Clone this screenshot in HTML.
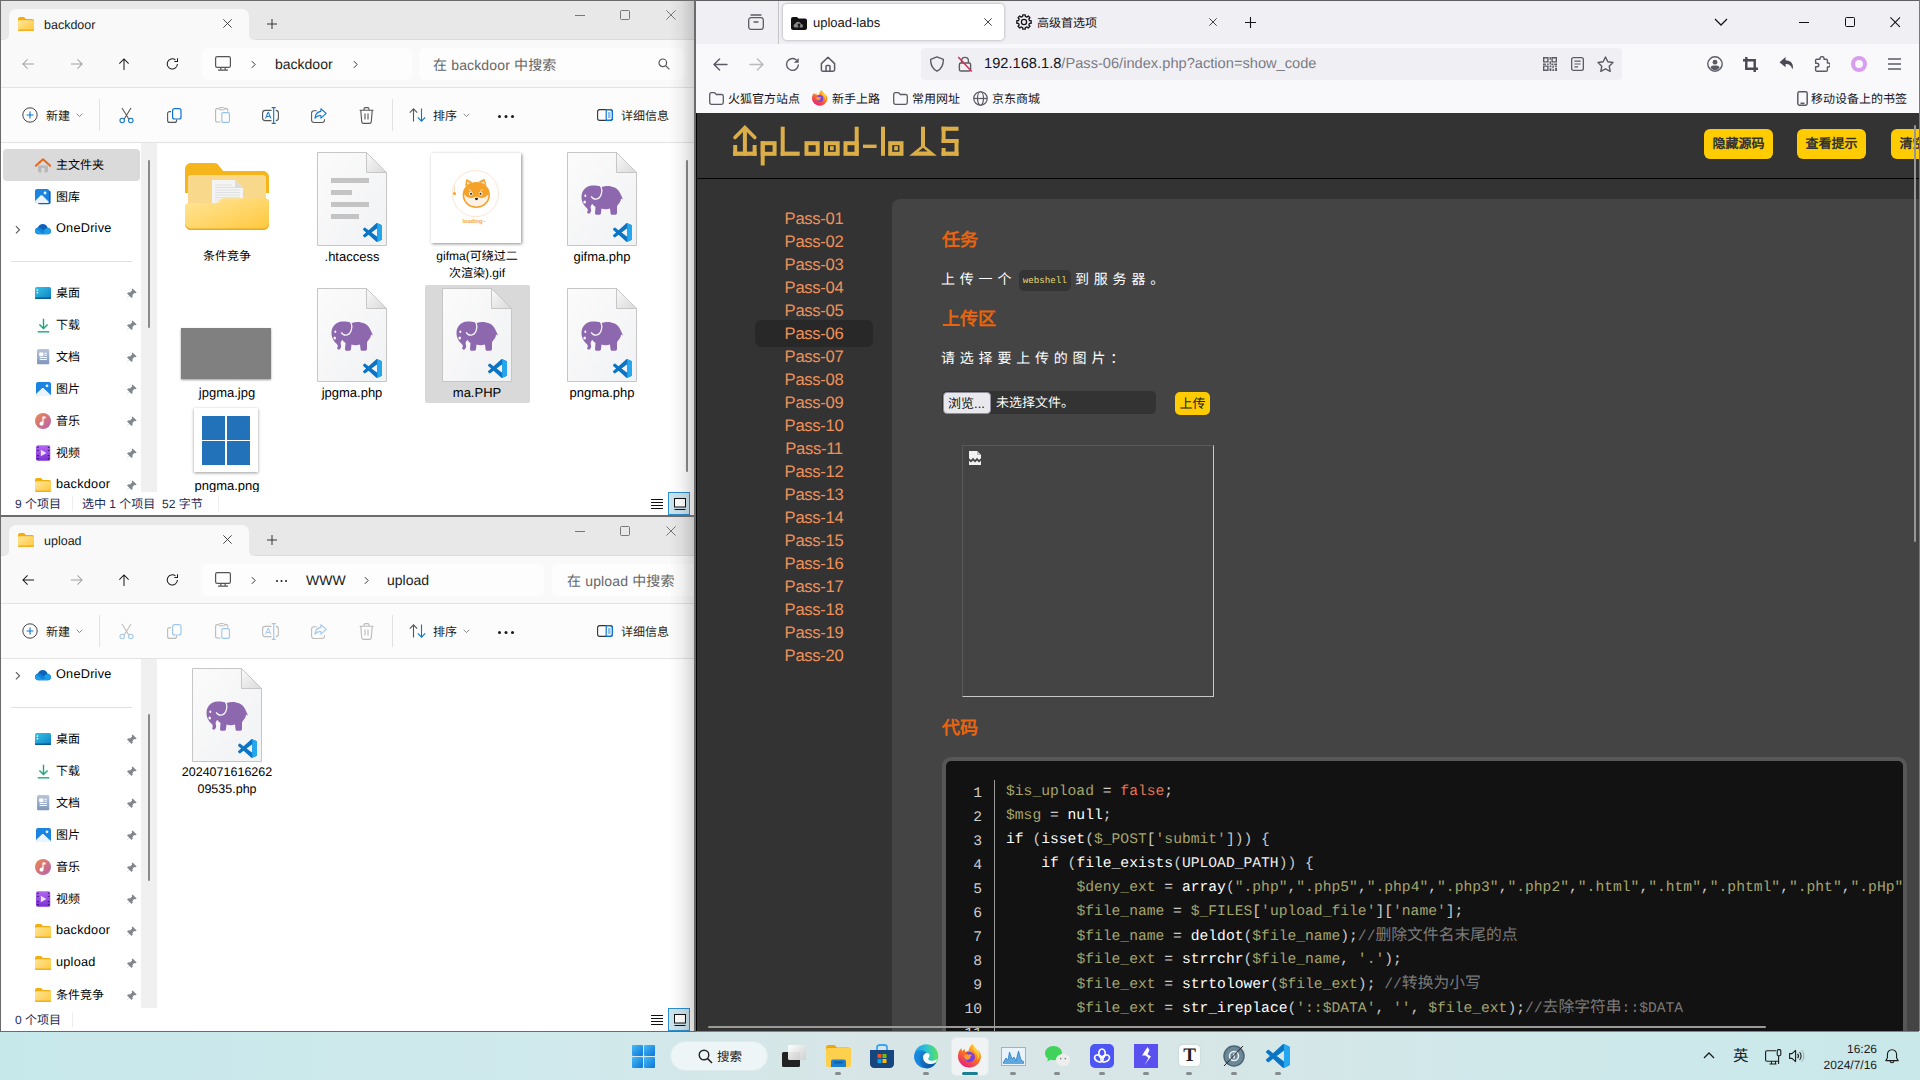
<!DOCTYPE html>
<html lang="zh-CN"><head><meta charset="utf-8"><title>screenshot</title>
<style>
*{box-sizing:border-box;margin:0;padding:0}
html,body{width:1920px;height:1080px;overflow:hidden}
body{position:relative;text-rendering:geometricPrecision;background:#cfe7ea;font-family:"Liberation Sans",sans-serif;font-size:12px;color:#1b1b1b}
.abs{position:absolute}
svg{position:absolute;overflow:visible}
.t{position:absolute;white-space:nowrap;line-height:1}
/* explorer */
.ex{position:absolute;left:0;width:696px;height:517px;background:#6b6b6b;overflow:hidden}
.ex .in{position:absolute;left:1px;top:1px;width:693px;height:514px;background:#fff;overflow:hidden}
.ex .tb{position:absolute;left:0;top:0;width:693px;height:39px;background:#e8e8e8}
.ex .tab{position:absolute;left:8px;top:8px;width:240px;height:31px;background:#f9f9f9;border-radius:7px 7px 0 0}
.ex .tabl,.ex .tabr{position:absolute;top:34px;width:6px;height:5px;background:#f9f9f9}
.ex .tabl i,.ex .tabr i{position:absolute;left:0;top:0;width:6px;height:5px;background:#e8e8e8;display:block}
.ex .tabl{left:2px}.ex .tabl i{border-radius:0 0 5px 0}
.ex .tabr{left:248px}.ex .tabr i{border-radius:0 0 0 5px}
.ex .nav{position:absolute;left:0;top:39px;width:693px;height:48px;background:#f9f9f9;border-bottom:1px solid #e3e3e3}
.ex .box{position:absolute;top:8px;height:32px;background:#fdfdfd;border-radius:5px}
.ex .tools{position:absolute;left:0;top:87px;width:693px;height:55px;background:#fcfcfc;border-bottom:1px solid #e3e3e3}
.ex .sep{position:absolute;width:1px;background:#e2e2e2}
.ex .side{position:absolute;left:0;top:142px;width:140px;height:349px;background:#fff;overflow:hidden}
.ex .split{position:absolute;left:140px;top:142px;width:16px;height:349px;background:#f0f0f0}
.ex .main{position:absolute;left:156px;top:142px;width:537px;height:349px;background:#fff;overflow:hidden}
.ex .status{position:absolute;left:0;top:491px;width:693px;height:23px;background:#fff}
.ex .shade{position:absolute;left:668px;top:0;width:26px;height:516px;background:linear-gradient(90deg,rgba(0,0,0,0),rgba(0,0,0,.05) 50%,rgba(0,0,0,.17))}
.srow{position:absolute;left:0;width:140px;height:32px}
.srow .t{color:#000;left:55px;top:9.7px;font-size:12px}
.srow .t.en{font-size:12.7px;top:9px;letter-spacing:.25px}
.lab{position:absolute;color:#000;text-align:center;font-size:12px;line-height:17px;width:110px;white-space:nowrap}
.lab.en{font-size:13px}
.lab.num{font-size:12.5px}
/* firefox */
#ff{position:absolute;left:696px;top:0;width:1224px;height:1032px;background:#f9f9fb;overflow:hidden}
#page{position:absolute;left:0;top:113px;width:1223px;height:919px;background:#333;overflow:hidden}
.pass{position:absolute;left:59px;width:118px;text-align:center;font-size:16.6px;letter-spacing:-.3px;color:#f0915a;line-height:23px}
.h3{position:absolute;left:246px;font-size:18px;font-weight:bold;color:#e8640f;line-height:1;white-space:nowrap}
.p{position:absolute;left:245px;font-size:14px;color:#fff;letter-spacing:4.8px;line-height:1;white-space:nowrap}
.btn{position:absolute;background:#fecc00;border-radius:6px;color:#333;font-weight:bold;font-size:13px;text-align:center;white-space:nowrap}
.cl{position:absolute;left:0;white-space:pre;font-family:"Liberation Mono",monospace;font-size:14.67px;line-height:24px;height:24px;color:#ccc}
.ln{position:absolute;width:40px;text-align:right;font-family:"Liberation Mono",monospace;font-size:14.67px;line-height:24px;color:#ccc}
.v{color:#a5a56f}.k{color:#fff;font-weight:bold}.f{color:#fff}.c{color:#7a7a7a}.b{color:#e8734f}.z{font-size:15.8px}.s{color:#a5a56f}
/* taskbar */
#task{position:absolute;left:0;top:1032px;width:1920px;height:48px;background:linear-gradient(90deg,#c7e8eb 0%,#cfe9ec 28%,#d8e5e6 46%,#d7e6e7 62%,#cfe8ea 80%,#c9e8ea 100%)}
</style></head>
<body>

<svg width="0" height="0" style="position:absolute">
<defs>
<linearGradient id="gfold" x1="0" y1="0" x2="1" y2="1"><stop offset="0" stop-color="#ffe59a"/><stop offset="1" stop-color="#ffc83c"/></linearGradient>
<linearGradient id="gpage" x1="0" y1="0" x2="1" y2="1"><stop offset="0" stop-color="#fbfbfb"/><stop offset="1" stop-color="#f1f2f4"/></linearGradient>
<linearGradient id="gcorner" x1="0" y1="0" x2="1" y2="1"><stop offset="0" stop-color="#fafafa"/><stop offset="1" stop-color="#d9d9d9"/></linearGradient>
<linearGradient id="gwin" x1="0" y1="0" x2="1" y2="1"><stop offset="0" stop-color="#4cc2ff"/><stop offset="1" stop-color="#0a6fd6"/></linearGradient>
<linearGradient id="gmusic" x1="0" y1="0" x2="1" y2="1"><stop offset="0" stop-color="#f08a4b"/><stop offset="1" stop-color="#b45fb0"/></linearGradient>
<linearGradient id="gvid" x1="0" y1="0" x2="0" y2="1"><stop offset="0" stop-color="#b06af0"/><stop offset="1" stop-color="#7d2fd6"/></linearGradient>
<linearGradient id="gdesk" x1="0" y1="0" x2="1" y2="1"><stop offset="0" stop-color="#35c5ea"/><stop offset="1" stop-color="#0f7fc0"/></linearGradient>
<linearGradient id="gdoc" x1="0" y1="0" x2="0" y2="1"><stop offset="0" stop-color="#b8c6dc"/><stop offset="1" stop-color="#7e95b9"/></linearGradient>
<linearGradient id="gfx" x1="0.8" y1="0" x2="0.2" y2="1"><stop offset="0" stop-color="#ffd43a"/><stop offset=".45" stop-color="#ff7a1a"/><stop offset="1" stop-color="#e31587"/></linearGradient>
<linearGradient id="gedge" x1="0" y1="0" x2="1" y2="1"><stop offset="0" stop-color="#1b84d6"/><stop offset=".6" stop-color="#1c9fc5"/><stop offset="1" stop-color="#5edb6a"/></linearGradient>

<symbol id="s-folder" viewBox="0 0 16 14"><path d="M0 2.2C0 1 .8 0 2 0h4l2 2h6.2c1 0 1.8.8 1.8 1.8V5H0z" fill="#f2ae0c"/><rect x="0" y="3.2" width="16" height="10.8" rx="1.4" fill="url(#gfold)"/><rect x="0" y="12.6" width="16" height="1.4" rx=".7" fill="#f0b020"/></symbol>

<symbol id="s-back" viewBox="0 0 14 12"><path d="M13 6H1.2M6 1 1 6l5 5" fill="none" stroke="currentColor" stroke-width="1.1"/></symbol>
<symbol id="s-fwd" viewBox="0 0 14 12"><path d="M1 6h11.8M8 1l5 5-5 5" fill="none" stroke="currentColor" stroke-width="1.1"/></symbol>
<symbol id="s-up" viewBox="0 0 12 14"><path d="M6 13V1.2M1 6l5-5 5 5" fill="none" stroke="currentColor" stroke-width="1.1"/></symbol>
<symbol id="s-ref" viewBox="0 0 14 14"><path d="M12.3 7A5.5 5.5 0 1 1 10.2 2.6M12.4.8v3.4H9" fill="none" stroke="currentColor" stroke-width="1.1"/></symbol>
<symbol id="s-pc" viewBox="0 0 16 15"><rect x=".6" y=".6" width="14.8" height="10.8" rx="1.6" fill="none" stroke="#555" stroke-width="1.2"/><path d="M3 14.2h10M5.8 11.5v2.7M10.2 11.5v2.7" stroke="#555" stroke-width="1.2" fill="none"/></symbol>
<symbol id="s-chev" viewBox="0 0 6 10"><path d="M1 1l4 4-4 4" fill="none" stroke="currentColor" stroke-width="1.2"/></symbol>
<symbol id="s-chevd" viewBox="0 0 8 5"><path d="M.8.8 4 4 7.2.8" fill="none" stroke="#777" stroke-width="1"/></symbol>
<symbol id="s-search" viewBox="0 0 12 12"><circle cx="4.8" cy="4.8" r="3.8" fill="none" stroke="#555" stroke-width="1.2"/><path d="M7.6 7.6 11.4 11.4" stroke="#555" stroke-width="1.2"/></symbol>
<symbol id="s-new" viewBox="0 0 16 16"><circle cx="8" cy="8" r="7.2" fill="none" stroke="#444" stroke-width="1"/><path d="M8 4.6v6.8M4.6 8h6.8" stroke="#0a74d4" stroke-width="1.1"/></symbol>
<symbol id="s-cut" viewBox="0 0 16 17"><path d="M3.2 0.6 10.6 12.6M12.8 0.6 5.4 12.6" stroke="#555" stroke-width="1.1" fill="none"/><circle cx="3.4" cy="13.8" r="2.4" fill="none" stroke="#0a74d4" stroke-width="1.1"/><circle cx="12.6" cy="13.8" r="2.4" fill="none" stroke="#0a74d4" stroke-width="1.1"/></symbol>
<symbol id="s-copy" viewBox="0 0 15 15"><path d="M4 3.6H2.6C1.6 3.6 .6 4.4 .6 5.6V12.4c0 1.1.9 2 2 2h5c1.1 0 2-.9 2-2V11.6" fill="none" stroke="#555" stroke-width="1.1"/><rect x="5.6" y=".6" width="8.4" height="10.4" rx="2" fill="none" stroke="#0a74d4" stroke-width="1.2"/></symbol>
<symbol id="s-paste" viewBox="0 0 15 16"><path d="M5.5 15H2.2C1.3 15 .6 14.3 .6 13.4V3.2C.6 2.3 1.3 1.6 2.2 1.6H3.6M9.8 1.6H11.2C12.1 1.6 12.8 2.3 12.8 3.2V4.6" fill="none" stroke="#555" stroke-width="1.1"/><rect x="3.8" y=".6" width="5.8" height="2.2" rx="1" fill="none" stroke="#555" stroke-width="1"/><rect x="6.8" y="5.6" width="7.6" height="9.8" rx="1.2" fill="none" stroke="#0a74d4" stroke-width="1.1"/></symbol>
<symbol id="s-ren" viewBox="0 0 17 17"><path d="M9.5 3.4H3.2C1.8 3.4 .6 4.6 .6 6V11c0 1.4 1.2 2.6 2.6 2.6h6.3M13.8 3.4c1.4 0 2.6 1.2 2.6 2.6V11c0 1.4-1.2 2.6-2.6 2.6" fill="none" stroke="#555" stroke-width="1.1"/><path d="M11.7 .6V16.4M9.7 .6h4M9.7 16.4h4" stroke="#0a74d4" stroke-width="1.1" fill="none"/><path d="M3.6 11.4 6 5.2h.4L8.8 11.4M4.5 9.4h3.4" stroke="#0a74d4" stroke-width="1" fill="none"/></symbol>
<symbol id="s-share" viewBox="0 0 17 16"><path d="M6 3H3.2C1.8 3 .6 4.2 .6 5.6V12.8c0 1.4 1.2 2.6 2.6 2.6h8.6c1.4 0 2.6-1.2 2.6-2.6V12" fill="none" stroke="#555" stroke-width="1.1"/><path d="M10.5 .8 16.2 5.8 10.5 10.8V8C7.6 7.8 5.6 8.8 4.2 11c.2-4 2.4-6.8 6.3-7.4z" fill="none" stroke="#0a74d4" stroke-width="1.1" stroke-linejoin="round"/></symbol>
<symbol id="s-del" viewBox="0 0 15 17"><path d="M.6 3.2h13.8M5 3V2C5 1.2 5.6 .6 6.4 .6h2.2C9.4 .6 10 1.2 10 2v1M1.8 3.4l.9 11.2c.1 1 .9 1.8 1.9 1.8h5.8c1 0 1.8-.8 1.9-1.8l.9-11.2M6 6.6v6M9 6.6v6" fill="none" stroke="#555" stroke-width="1.1"/></symbol>
<symbol id="s-sort" viewBox="0 0 18 14"><path d="M4.5 13.4V1M.8 4.6 4.5 .9l3.7 3.7" fill="none" stroke="#555" stroke-width="1.1"/><path d="M12.5 .6V13M8.8 9.4l3.7 3.7 3.7-3.7" fill="none" stroke="#0a74d4" stroke-width="1.1"/></symbol>
<symbol id="s-det" viewBox="0 0 16 12"><rect x=".6" y=".6" width="14.8" height="10.8" rx="2.2" fill="none" stroke="#333" stroke-width="1.1"/><path d="M9.2 .6H13.2c1.2 0 2.2 1 2.2 2.2V9.2c0 1.2-1 2.2-2.2 2.2H9.2z" fill="none" stroke="#0a74d4" stroke-width="1.2"/><path d="M11 4h2.6M11 6h2.6M11 8h2.6" stroke="#0a74d4" stroke-width=".9"/></symbol>
<symbol id="s-pin" viewBox="0 0 11 11"><path d="M6.6 .4 10.6 4.4 9.6 5.2 8.4 4.9 6.6 6.7 6.5 9 5.5 10 3.3 7.7.5 10.5.4 10.4 3.2 7.6 1 5.4 2 4.4 4.3 4.3 6.1 2.5 5.8 1.3z" fill="#7f868c"/></symbol>
<symbol id="s-min" viewBox="0 0 10 1"><path d="M0 .5h10" stroke="currentColor" stroke-width="1"/></symbol>
<symbol id="s-max" viewBox="0 0 10 10"><rect x=".5" y=".5" width="9" height="9" rx="1" fill="none" stroke="currentColor" stroke-width="1"/></symbol>
<symbol id="s-x" viewBox="0 0 10 10"><path d="M.4.4 9.6 9.6M9.6.4.4 9.6" stroke="currentColor" stroke-width="1" fill="none"/></symbol>
<symbol id="s-plus" viewBox="0 0 10 10"><path d="M5 0v10M0 5h10" stroke="currentColor" stroke-width="1" fill="none"/></symbol>

<symbol id="s-home" viewBox="0 0 16 15"><path d="M3 7.6V13c0 .8.6 1.4 1.4 1.4H6.5V10h3v4.4h2.1c.8 0 1.4-.6 1.4-1.4V7.6z" fill="#b9b9b9"/><path d="M.8 7.8 8 1.2l7.2 6.6" fill="none" stroke="#e8671c" stroke-width="1.9" stroke-linecap="round" stroke-linejoin="round"/></symbol>
<symbol id="s-gal" viewBox="0 0 16 16"><rect x="2.6" y="1.6" width="13" height="13.6" rx="2" fill="#0f5fb4"/><rect x="0" y="0" width="14" height="14" rx="2" fill="#1a84e0"/><path d="M0 12 5.5 6.6c.6-.6 1.4-.6 2 0L14 13c-.3.6-1 1-1.7 1H2c-1.1 0-2-.9-2-2z" fill="#eaf4ff"/><circle cx="10" cy="4" r="1.4" fill="#eaf4ff"/></symbol>
<symbol id="s-cloud" viewBox="0 0 17 11"><path d="M4.2 11C1.9 11 0 9.4 0 7.3 0 5.5 1.3 4 3.1 3.6 3.9 1.5 5.9 0 8.2 0c2.5 0 4.6 1.6 5.2 3.9C15.4 4.1 17 5.6 17 7.5 17 9.5 15.3 11 13.2 11z" fill="#0f62b8"/><path d="M4.2 11C1.9 11 0 9.4 0 7.3 0 6.3.4 5.4 1.1 4.7L8.5 7.2 12.5 4.3c.3-.2.6-.3.9-.4C15.4 4.1 17 5.6 17 7.5 17 9.5 15.3 11 13.2 11z" fill="#1f9ee8"/><path d="M1.1 4.7C1.7 4.1 2.4 3.8 3.1 3.6 4.2 3.4 5.3 3.7 6.2 4.4L11 8.2 8 10.2z" fill="#1482da"/></symbol>
<symbol id="s-desk" viewBox="0 0 16 12"><rect width="16" height="12" rx="1.6" fill="url(#gdesk)"/><rect x="1.6" y="2.4" width="1.6" height="1.4" fill="#e8f8ff"/><rect x="1.6" y="5" width="1.6" height="1.4" fill="#e8f8ff"/><path d="M0 10.4h16V11c0 .6-.4 1-1 1H1c-.6 0-1-.4-1-1z" fill="#0a5a90"/></symbol>
<symbol id="s-dl" viewBox="0 0 14 16"><path d="M7 .6V11M2.6 6.8 7 11.2l4.4-4.4" fill="none" stroke="#18a878" stroke-width="1.5"/><path d="M.8 14.8h12.4" stroke="#18a878" stroke-width="1.5"/></symbol>
<symbol id="s-doc" viewBox="0 0 13 16"><rect width="13" height="16" rx="1.6" fill="url(#gdoc)"/><path d="M2.8 4h3.4v3H2.8zM7.6 4.4h2.8M7.6 6.4h2.8M2.8 8.8h7.6M2.8 10.8h7.6" stroke="#fff" stroke-width="1" fill="#fff"/></symbol>
<symbol id="s-pic" viewBox="0 0 15 14"><rect width="15" height="14" rx="2" fill="#1a84e0"/><path d="M0 12 5.8 6.4c.6-.6 1.5-.6 2.1 0L15 13.2c-.3.5-.9.8-1.5.8h-12C.7 14 0 13.3 0 12.5z" fill="#eaf4ff"/><circle cx="11" cy="3.8" r="1.4" fill="#eaf4ff"/></symbol>
<symbol id="s-mus" viewBox="0 0 16 16"><circle cx="8" cy="8" r="8" fill="url(#gmusic)"/><path d="M7.4 3.6h3.2v1.8H8.6v5.2a2 2 0 1 1-1.2-1.8z" fill="#fff"/></symbol>
<symbol id="s-vid" viewBox="0 0 15 16"><rect width="15" height="16" rx="1.8" fill="url(#gvid)"/><path d="M5 4.6v6.8l5.8-3.4z" fill="#f0e0ff"/><path d="M1.2 2.2h1.6M1.2 5.2h1.6M1.2 10.8h1.6M1.2 13.8h1.6M12.2 2.2h1.6M12.2 5.2h1.6M12.2 10.8h1.6M12.2 13.8h1.6" stroke="#3d1478" stroke-width="1.3"/></symbol>

<symbol id="s-page" viewBox="0 0 70 94"><path d="M.5.5H49.5L69.5 20.5V93.5H.5z" fill="url(#gpage)" stroke="#c6c6c6" stroke-width="1"/><path d="M49.5.5V20.5H69.5z" fill="url(#gcorner)" stroke="#c6c6c6" stroke-width="1" stroke-linejoin="round"/></symbol>
<symbol id="s-ele" viewBox="0 0 42 30"><path d="M21 2C26 0 36 1 39 8 40 10 41 12 42 14.5L40 13.5C40 17 37 19 36 21.5L36 28Q36 29.7 34.5 29.7L30.5 29.7Q29.5 29.7 29.5 28L29 23.5C26 24.5 23 24.5 20.5 23.5L20 28Q20 29.7 18.5 29.7L15 29.7Q14 29.7 14 28L14.5 22C13 21 12 20 11.5 19 10 20 9.3 21.5 9.8 23.5 10.5 25.5 10.5 27 8 29L5.8 27.2C7 26.2 7.2 25 6.2 23.5 4 21 1 19 .5 13 0 5 6 0 12 .5 16 .5 19 1 21 2z" fill="#8e68ae"/><path d="M10.2 11.4C12.5 15.5 18 15 20 10 21.5 6 20.5 2.5 19.3 .7" fill="none" stroke="#f7f7f9" stroke-width="1.3"/><ellipse cx="4.3" cy="10.8" rx="1" ry="1.2" fill="#f7f7f9"/><ellipse cx="3.7" cy="17" rx="1.3" ry="1.5" fill="#f7f7f9"/></symbol>
<symbol id="s-vsc" viewBox="0 0 100 100"><path d="M96.46 10.8 75.86.880C73.47-.270 70.62.210 68.75 2.09L29.31 38.04 12.13 25.01C10.53 23.79 8.3 23.89 6.81 25.24L1.3 30.26C-.520 31.91-.520 34.77 1.3 36.43L16.19 50 1.3 63.58C-.520 65.23-.520 68.09 1.3 69.75L6.81 74.76C8.3 76.12 10.53 76.21 12.13 75L29.31 61.96 68.75 97.91C70.62 99.79 73.47 100.27 75.86 99.12L96.46 89.21C98.63 88.17 100 85.98 100 83.58V16.42C100 14.02 98.62 11.83 96.46 10.79ZM75.01 72.7 45.07 50 75.01 27.3Z" fill="#0b74c4"/><path d="M96.46 10.8 75.86.880C74.2.1 72.3.1 70.7.8 72.6 1.6 75.01 3.5 75.01 7V93c0 3.5-2.4 5.4-4.3 6.2 1.6.7 3.5.7 5.15-.080L96.46 89.21C98.63 88.17 100 85.98 100 83.58V16.42C100 14.02 98.62 11.83 96.46 10.79Z" fill="#25a7f0"/></symbol>
<symbol id="s-bigfolder" viewBox="0 0 84 67"><path d="M0 6C0 2.7 2.7 0 6 0H29c2 0 3.6.8 4.8 2.4L38 8H78c3.3 0 6 2.7 6 6V30H0z" fill="#f5b51b"/><rect x="3" y="12" width="78" height="40" rx="3" fill="#f8d98c"/><path d="M27 17h23l8 8v20H27z" fill="#f4f4f4"/><path d="M50 17v8h8z" fill="#dcdcdc"/><path d="M30 22h17M30 24.5h25M30 27h25M30 29.5h25M30 32h25M30 34.5h25M30 37h25" stroke="#dadada" stroke-width=".8"/><path d="M0 43.5C0 41.5 1.6 39.9 3.6 39.9H30c1.6 0 3-.6 4-1.7l1.3-1.3c1-1.1 2.4-1.7 4-1.7H80.4c2 0 3.6 1.6 3.6 3.6V61c0 3.3-2.7 6-6 6H6c-3.3 0-6-2.7-6-6z" fill="url(#gfold)"/><path d="M0 61c0 3.3 2.7 6 6 6H78c3.3 0 6-2.7 6-6v-1.5c0 3.3-2.7 6-6 6H6c-3.3 0-6-2.7-6-6z" fill="#eda91a"/></symbol>
</defs>
</svg>


<svg width="0" height="0" style="position:absolute"><defs>
<symbol id="f-back" viewBox="0 0 16 14"><path d="M15 7H1.6M7 1 1 7l6 6" fill="none" stroke="currentColor" stroke-width="1.5" stroke-linecap="round" stroke-linejoin="round"/></symbol>
<symbol id="f-fwd" viewBox="0 0 16 14"><path d="M1 7h13.4M9 1l6 6-6 6" fill="none" stroke="currentColor" stroke-width="1.5" stroke-linecap="round" stroke-linejoin="round"/></symbol>
<symbol id="f-rel" viewBox="0 0 16 16"><path d="M14.2 8.5A6.3 6.3 0 1 1 11.8 3" fill="none" stroke="currentColor" stroke-width="1.5" stroke-linecap="round"/><path d="M14.6 1v5.2H9.4z" fill="currentColor"/></symbol>
<symbol id="f-home" viewBox="0 0 16 16"><path d="M1.4 7.6 8 1.2l6.6 6.4V13.8c0 .8-.6 1.4-1.4 1.4H2.8c-.8 0-1.4-.6-1.4-1.4z" fill="none" stroke="currentColor" stroke-width="1.5" stroke-linejoin="round"/><path d="M6 15V10.6c0-.6.4-1 1-1h2c.6 0 1 .4 1 1V15" fill="none" stroke="currentColor" stroke-width="1.5"/></symbol>
<symbol id="f-shield" viewBox="0 0 16 16"><path d="M8 .9 14.4 3.3c0 5.2-1.6 9.6-6.4 11.9C3.2 12.9 1.6 8.5 1.6 3.3z" fill="none" stroke="currentColor" stroke-width="1.4" stroke-linejoin="round"/></symbol>
<symbol id="f-lock" viewBox="0 0 16 16"><path d="M4.6 7V4.8a3.4 3.4 0 0 1 6.8 0V7" fill="none" stroke="currentColor" stroke-width="1.4"/><rect x="2.4" y="7" width="11.2" height="8" rx="1.6" fill="none" stroke="currentColor" stroke-width="1.4"/><path d="M1.2 1 14.8 15.4" stroke="#e22850" stroke-width="1.4"/></symbol>
<symbol id="f-qr" viewBox="0 0 15 15"><path d="M0 0h6v6H0zM1.5 1.5v3h3v-3zM9 0h6v6H9zM10.5 1.5v3h3v-3zM0 9h6v6H0zM1.5 10.5v3h3v-3zM7 0h1.5v3H7zM7 4.5h1.5V8H7zM0 7h3v1.5H0zM4.5 7H6v1.5H4.5zM9 7h2v1.5H9zM12 7h3v1.5h-3zM7 9h2v2H7zM10 9h1.5v3H10zM12.5 9H15v1.5h-2.5zM7 12h2v3H7zM10 13h2v2h-2zM13 11.5h2V15h-2z" fill="currentColor" fill-rule="evenodd"/></symbol>
<symbol id="f-reader" viewBox="0 0 14 15"><rect x=".7" y=".7" width="12.6" height="13.6" rx="2" fill="none" stroke="currentColor" stroke-width="1.4"/><path d="M3.6 4.4h6.8M3.6 7.5h6.8M3.6 10.6h4" stroke="currentColor" stroke-width="1.3"/></symbol>
<symbol id="f-star" viewBox="0 0 17 16"><path d="M8.5 1 10.8 5.8 16 6.5 12.2 10.2 13.2 15.4 8.5 12.9 3.8 15.4 4.8 10.2 1 6.5 6.2 5.8z" fill="none" stroke="currentColor" stroke-width="1.4" stroke-linejoin="round"/></symbol>
<symbol id="f-acct" viewBox="0 0 16 16"><circle cx="8" cy="8" r="7.2" fill="none" stroke="currentColor" stroke-width="1.4"/><circle cx="8" cy="6.2" r="2.4" fill="currentColor"/><path d="M3.4 11.4C4.4 9.8 6 9.6 8 9.6s3.6.2 4.6 1.8C11.6 13 10 14 8 14s-3.6-1-4.6-2.6z" fill="currentColor"/></symbol>
<symbol id="f-crop" viewBox="0 0 16 16"><path d="M3.5 0v12.5H16M0 3.5h12.5V16" fill="none" stroke="currentColor" stroke-width="2.6"/></symbol>
<symbol id="f-undo" viewBox="0 0 16 15"><path d="M6.5 0 0 5.5 6.5 11V7.5c3.5-.2 6 1.3 7.2 5.5C14.8 13 16 4 6.5 3.5z" fill="currentColor"/></symbol>
<symbol id="f-puz" viewBox="0 0 16 16"><path d="M6 3.2V2.6a2 2 0 0 1 4 0v.6h2.2c.7 0 1.2.5 1.2 1.2V7h.8a2 2 0 0 1 0 4h-.8v3c0 .7-.5 1.2-1.2 1.2H2.8c-.7 0-1.2-.5-1.2-1.2V10.8H3a1.8 1.8 0 0 0 0-3.6H1.6V4.4c0-.7.5-1.2 1.2-1.2z" fill="none" stroke="currentColor" stroke-width="1.4" stroke-linejoin="round"/></symbol>
<symbol id="f-menu" viewBox="0 0 13 12"><path d="M0 1h13M0 6h13M0 11h13" stroke="currentColor" stroke-width="1.4"/></symbol>
<symbol id="f-view" viewBox="0 0 16 16"><path d="M3 1h10" stroke="currentColor" stroke-width="1.3" stroke-linecap="round"/><rect x=".7" y="3.7" width="14.6" height="11.6" rx="2.2" fill="none" stroke="currentColor" stroke-width="1.3"/><path d="M6 8h4" stroke="currentColor" stroke-width="1.3" stroke-linecap="round"/></symbol>
<symbol id="f-gear" viewBox="0 0 16 16"><path d="M6.67 2.46 L6.74 0.81 L9.26 0.81 L9.33 2.46 L10.98 3.14 L12.2 2.03 L13.97 3.8 L12.86 5.02 L13.54 6.67 L15.19 6.74 L15.19 9.26 L13.54 9.33 L12.86 10.98 L13.97 12.2 L12.2 13.97 L10.98 12.86 L9.33 13.54 L9.26 15.19 L6.74 15.19 L6.67 13.54 L5.02 12.86 L3.8 13.97 L2.03 12.2 L3.14 10.98 L2.46 9.33 L0.81 9.26 L0.81 6.74 L2.46 6.67 L3.14 5.02 L2.03 3.8 L3.8 2.03 L5.02 3.14Z" fill="none" stroke="currentColor" stroke-width="1.3" stroke-linejoin="round"/><circle cx="8" cy="8" r="2.6" fill="none" stroke="currentColor" stroke-width="1.3"/></symbol>
<symbol id="f-bfold" viewBox="0 0 15 13"><path d="M.7 2.4C.7 1.5 1.4.7 2.4.7H5c.6 0 1.1.3 1.4.7L7.2 2.5H12.6c.9 0 1.7.8 1.7 1.7V10.6c0 .9-.8 1.7-1.7 1.7H2.4c-.9 0-1.7-.8-1.7-1.7z" fill="none" stroke="#5b5b66" stroke-width="1.3"/></symbol>
<symbol id="f-globe" viewBox="0 0 16 16"><circle cx="8" cy="8" r="7.2" fill="none" stroke="#5b5b66" stroke-width="1.3"/><ellipse cx="8" cy="8" rx="3.2" ry="7.2" fill="none" stroke="#5b5b66" stroke-width="1.3"/><path d="M.8 8h14.4" stroke="#5b5b66" stroke-width="1.3"/></symbol>
<symbol id="f-fx" viewBox="0 0 32 32"><path d="M29.5 11.5c-.6-1.5-1.9-3.1-2.9-3.6.8 1.6 1.3 3.2 1.5 4.4-1.8-4.5-4.9-6.3-7.4-10.3-.1-.2-.3-.4-.4-.6-.1-.1-.1-.3-.2-.4-.1-.3-.2-.5-.2-.8 0 0 0-.1-.1-.1h-.1c-4 2.4-5.4 6.7-5.5 8.9-1.6.1-3.2.7-4.4 1.7-.1-.1-.3-.2-.4-.3-.4-1.3-.4-2.6-.1-3.9-1.6.7-2.9 1.9-3.8 3-.6-.8-.6-3.4-.5-3.9-.2.1-.4.2-.5.3-.6.4-1.1.9-1.6 1.4C2.3 8 1.9 8.7 1.5 9.4c-.7 1.5-1.1 3-1.3 4.7 0 .2-.1.8-.1.9-.1.6-.1 1.1-.1 1.7C0 24.6 6.8 31.5 15.3 31.5c7.6 0 13.8-5.5 15.1-12.7 0-.2.1-.4.1-.6.3-2.3 0-4.7-1-6.7z" fill="url(#gfx)"/><circle cx="15.5" cy="17.2" r="7" fill="#7542e5"/><path d="M8.5 14.2c1.8-1.5 4.2-1.3 5.6.2 1.3-.7 3.3-.7 4.6.1-1.2.6-2 1.5-2 2.9 0 2-2 3.6-4.2 3.6-3 0-5-3-4-6.8z" fill="#ff9a2a"/><path d="M20.7 2c2.5 4 5.6 5.8 7.4 10.3.9 4-0.5 7-2.6 9 1-3.5.5-6.5-1.5-9-1.5-2-3.2-3.5-3.8-6-.3-1.4-.1-2.9.5-4.3z" fill="#ffd43a" opacity=".85"/></symbol>
<symbol id="f-mob" viewBox="0 0 11 15"><rect x=".8" y=".8" width="9.4" height="13.4" rx="1.6" fill="none" stroke="#5b5b66" stroke-width="1.5"/><path d="M3.5 12.3h4" stroke="#5b5b66" stroke-width="1.5"/></symbol>
</defs></svg>

<div class="ex" style="top:0px;height:517px"><div class="in"><div class="tb"></div><div class="abs" style="left:0;top:38px;width:693px;height:1px;background:#dcdcdc"></div><div class="tabl"><i></i></div><div class="tabr"><i></i></div><div class="tab"></div><svg width="16" height="14" style="left:17px;top:16px;"><use href="#s-folder" width="16" height="14"/></svg><div class="t" style="left:43px;top:18px;font-size:12.5px;">backdoor</div><svg width="9" height="9" style="left:222px;top:18px;color:#333;"><use href="#s-x" width="9" height="9"/></svg><svg width="10" height="10" style="left:266px;top:18px;color:#333;"><use href="#s-plus" width="10" height="10"/></svg><svg width="10" height="1" style="left:574px;top:14px;color:#777;"><use href="#s-min" width="10" height="1"/></svg><svg width="10" height="10" style="left:619px;top:9px;color:#777;"><use href="#s-max" width="10" height="10"/></svg><svg width="10" height="10" style="left:665px;top:9px;color:#777;"><use href="#s-x" width="10" height="10"/></svg><div class="nav"><div class="box" style="left:201px;width:210px"></div><div class="box" style="left:418px;width:265px"></div></div><svg width="13" height="12" style="left:21px;top:57px;color:#a2a2a2;"><use href="#s-back" width="13" height="12"/></svg><svg width="13" height="12" style="left:69px;top:57px;color:#a2a2a2;"><use href="#s-fwd" width="13" height="12"/></svg><svg width="12" height="13" style="left:117px;top:57px;color:#1b1b1b;"><use href="#s-up" width="12" height="13"/></svg><svg width="13" height="14" style="left:165px;top:56px;color:#1b1b1b;"><use href="#s-ref" width="13" height="14"/></svg><svg width="16" height="15" style="left:214px;top:55px;"><use href="#s-pc" width="16" height="15"/></svg><svg width="5" height="9" style="left:250px;top:58.5px;color:#333;"><use href="#s-chev" width="5" height="9"/></svg><div class="t" style="left:274px;top:56px;font-size:14px;">backdoor</div><svg width="5" height="9" style="left:352px;top:58.5px;color:#333;"><use href="#s-chev" width="5" height="9"/></svg><div class="t" style="left:432px;top:57px;font-size:14px;color:#666;letter-spacing:.15px;">在 backdoor 中搜索</div><svg width="12" height="12" style="left:657px;top:57px;"><use href="#s-search" width="12" height="12"/></svg><div class="tools"></div><svg width="16" height="16" style="left:21px;top:106px;"><use href="#s-new" width="16" height="16"/></svg><div class="t" style="left:45px;top:109px;font-size:12px;">新建</div><svg width="7" height="4.5" style="left:75px;top:112px;"><use href="#s-chevd" width="7" height="4.5"/></svg><div class="sep" style="left:98px;top:98px;height:32px"></div><svg width="15" height="17" style="left:118px;top:106px;"><use href="#s-cut" width="15" height="17"/></svg><svg width="15" height="15" style="left:166px;top:107px;"><use href="#s-copy" width="15" height="15"/></svg><svg width="15" height="16" style="left:214px;top:106px;opacity:.42;"><use href="#s-paste" width="15" height="16"/></svg><svg width="17" height="17" style="left:261px;top:106px;"><use href="#s-ren" width="17" height="17"/></svg><svg width="16" height="15" style="left:310px;top:107px;"><use href="#s-share" width="16" height="15"/></svg><svg width="15" height="17" style="left:358px;top:106px;"><use href="#s-del" width="15" height="17"/></svg><div class="sep" style="left:391px;top:98px;height:32px"></div><svg width="18" height="14" style="left:408px;top:107px;"><use href="#s-sort" width="18" height="14"/></svg><div class="t" style="left:432px;top:109px;font-size:12px;">排序</div><svg width="7" height="4.5" style="left:462px;top:112px;"><use href="#s-chevd" width="7" height="4.5"/></svg><div class="abs" style="left:497px;top:113.5px;width:3px;height:3px;border-radius:2px;background:#1b1b1b;box-shadow:6.5px 0 0 #1b1b1b,13px 0 0 #1b1b1b"></div><svg width="16" height="12" style="left:596px;top:108px;"><use href="#s-det" width="16" height="12"/></svg><div class="t" style="left:620px;top:109px;font-size:12px;">详细信息</div><div class="side"><div class="srow" style="top:6px"><div class="abs" style="left:2px;top:0;width:137px;height:32px;background:#dadada;border-radius:4px"></div><svg width="16" height="15" style="left:34px;top:8.5px;"><use href="#s-home" width="16" height="15"/></svg><div class="t">主文件夹</div></div><div class="srow" style="top:38px"><svg width="16" height="16" style="left:34px;top:8px;"><use href="#s-gal" width="16" height="16"/></svg><div class="t">图库</div></div><div class="srow" style="top:70px"><svg width="5.5" height="9.5" style="left:14px;top:11.5px;color:#5a5a5a;"><use href="#s-chev" width="5.5" height="9.5"/></svg><svg width="16" height="10.5" style="left:34px;top:10.75px;"><use href="#s-cloud" width="16" height="10.5"/></svg><div class="t en">OneDrive</div></div><div class="abs" style="left:10px;top:118px;width:121px;height:1px;background:#e0e0e0"></div><div class="srow" style="top:134px"><svg width="16" height="12" style="left:34px;top:10px;"><use href="#s-desk" width="16" height="12"/></svg><div class="t">桌面</div><svg width="11" height="11" style="left:124.5px;top:11px;"><use href="#s-pin" width="11" height="11"/></svg></div><div class="srow" style="top:166px"><svg width="13" height="15" style="left:35.5px;top:8.5px;"><use href="#s-dl" width="13" height="15"/></svg><div class="t">下载</div><svg width="11" height="11" style="left:124.5px;top:11px;"><use href="#s-pin" width="11" height="11"/></svg></div><div class="srow" style="top:198px"><svg width="12.5" height="15.5" style="left:35.75px;top:8.25px;"><use href="#s-doc" width="12.5" height="15.5"/></svg><div class="t">文档</div><svg width="11" height="11" style="left:124.5px;top:11px;"><use href="#s-pin" width="11" height="11"/></svg></div><div class="srow" style="top:230px"><svg width="15" height="14" style="left:34.5px;top:9px;"><use href="#s-pic" width="15" height="14"/></svg><div class="t">图片</div><svg width="11" height="11" style="left:124.5px;top:11px;"><use href="#s-pin" width="11" height="11"/></svg></div><div class="srow" style="top:262px"><svg width="16" height="16" style="left:34px;top:8px;"><use href="#s-mus" width="16" height="16"/></svg><div class="t">音乐</div><svg width="11" height="11" style="left:124.5px;top:11px;"><use href="#s-pin" width="11" height="11"/></svg></div><div class="srow" style="top:294px"><svg width="14.5" height="16" style="left:34.75px;top:8px;"><use href="#s-vid" width="14.5" height="16"/></svg><div class="t">视频</div><svg width="11" height="11" style="left:124.5px;top:11px;"><use href="#s-pin" width="11" height="11"/></svg></div><div class="srow" style="top:326px"><svg width="16" height="14" style="left:34px;top:9px;"><use href="#s-folder" width="16" height="14"/></svg><div class="t en">backdoor</div><svg width="11" height="11" style="left:124.5px;top:11px;"><use href="#s-pin" width="11" height="11"/></svg></div></div><div class="split"></div><div class="abs" style="left:147px;top:159px;width:2px;height:168px;background:#8a8a8a;border-radius:1px"></div><div class="main"><svg width="84" height="67" style="left:28px;top:20px;"><use href="#s-bigfolder" width="84" height="67"/></svg><div class="lab" style="left:15px;top:105px">条件竞争</div><svg width="70" height="94" style="left:160px;top:9px;"><use href="#s-page" width="70" height="94"/></svg><div class="abs" style="left:174px;top:35px;width:38px;height:5px;background:#c4c4c4"></div><div class="abs" style="left:174px;top:47px;width:21px;height:5px;background:#c4c4c4"></div><div class="abs" style="left:174px;top:59px;width:38px;height:5px;background:#c4c4c4"></div><div class="abs" style="left:174px;top:71px;width:28px;height:5px;background:#c4c4c4"></div><svg width="19" height="19" style="left:206px;top:80px;"><use href="#s-vsc" width="19" height="19"/></svg><div class="lab en" style="left:140px;top:105px">.htaccess</div><div class="abs" style="left:274px;top:9.5px;width:90px;height:90px;background:#fff;box-shadow:1px 1px 3px rgba(0,0,0,.45)"></div><svg width="90" height="90" style="left:274px;top:9.5px" viewBox="0 0 90 90"><circle cx="44.5" cy="40.6" r="23.1" fill="none" stroke="#fbd8be" stroke-width=".7"/><path d="M34.1 33.5 35.1 26.7Q35.3 26 36 26.3L41.5 29.2ZM47.5 28.7 52.8 26Q53.5 25.7 53.8 26.4L55.6 33Z" fill="#f5a229"/><path d="M35.8 31.5 36.2 28.5 39.3 30ZM50 29.8 52.8 28.2 53.8 31.3Z" fill="#fbe3d2"/><ellipse cx="45.3" cy="42" rx="13.7" ry="13" fill="#f5a229"/><path d="M33.3 41.3C35.5 44.8 40 46 43.5 44.2 44.5 43.6 46 43.6 47 44.2 50.5 46 55 44.8 57.3 41.3 57.8 48 52.5 53.4 45.3 53.4 38.1 53.4 32.8 48 33.3 41.3Z" fill="#fdf0e4"/><circle cx="39.8" cy="40.7" r="1.9" fill="#fdf6ee"/><circle cx="49.7" cy="40.7" r="1.9" fill="#fdf6ee"/><circle cx="40" cy="40.8" r="1" fill="#222"/><circle cx="49.5" cy="40.8" r="1" fill="#222"/><path d="M38 36.5 40.3 38.3M51.5 36.5 49.2 38.3" stroke="#fbe3c6" stroke-width="1" stroke-linecap="round"/><path d="M43.8 45.2Q45.5 44.5 47.2 45.2 46.8 47 45.5 47.3 44.2 47 43.8 45.2Z" fill="#1d1d1d"/><circle cx="23.5" cy="40.5" r="1.5" fill="#f5a229"/><path d="M23.5 33.5v1M23.5 35.5v1.2M23.5 37.6v.8" stroke="#f8c98f" stroke-width="1.2"/></svg><div class="t" style="left:305.5px;top:77.2px;font-size:5.8px;font-weight:bold;color:#f6ab4c;letter-spacing:-.1px">loading~</div><div class="lab" style="left:265px;top:105px">gifma(可绕过二</div><div class="lab" style="left:265px;top:122px">次渲染).gif</div><svg width="70" height="94" style="left:410px;top:9px;"><use href="#s-page" width="70" height="94"/></svg><svg width="42" height="30" style="left:424px;top:42px;"><use href="#s-ele" width="42" height="30"/></svg><svg width="19" height="19" style="left:456px;top:80px;"><use href="#s-vsc" width="19" height="19"/></svg><div class="lab en" style="left:390px;top:105px">gifma.php</div><div class="abs" style="left:24px;top:185px;width:90px;height:51px;background:#808080;box-shadow:0 1px 2px rgba(0,0,0,.4)"></div><div class="lab en" style="left:15px;top:241px">jpgma.jpg</div><svg width="70" height="94" style="left:160px;top:145px;"><use href="#s-page" width="70" height="94"/></svg><svg width="42" height="30" style="left:174px;top:178px;"><use href="#s-ele" width="42" height="30"/></svg><svg width="19" height="19" style="left:206px;top:216px;"><use href="#s-vsc" width="19" height="19"/></svg><div class="lab en" style="left:140px;top:241px">jpgma.php</div><div class="abs" style="left:268px;top:142px;width:105px;height:118px;background:#d9d9d9;border-radius:2px"></div><svg width="70" height="94" style="left:285px;top:145px;"><use href="#s-page" width="70" height="94"/></svg><svg width="42" height="30" style="left:299px;top:178px;"><use href="#s-ele" width="42" height="30"/></svg><svg width="19" height="19" style="left:331px;top:216px;"><use href="#s-vsc" width="19" height="19"/></svg><div class="lab en" style="left:265px;top:241px">ma.PHP</div><svg width="70" height="94" style="left:410px;top:145px;"><use href="#s-page" width="70" height="94"/></svg><svg width="42" height="30" style="left:424px;top:178px;"><use href="#s-ele" width="42" height="30"/></svg><svg width="19" height="19" style="left:456px;top:216px;"><use href="#s-vsc" width="19" height="19"/></svg><div class="lab en" style="left:390px;top:241px">pngma.php</div><div class="abs" style="left:37px;top:265px;width:64px;height:64px;background:#fff;box-shadow:0 1px 3px rgba(0,0,0,.4)"></div><div class="abs" style="left:45px;top:273px;width:23px;height:23.5px;background:#2272b9"></div><div class="abs" style="left:69.5px;top:273px;width:23px;height:23.5px;background:#2272b9"></div><div class="abs" style="left:45px;top:298px;width:23px;height:23.5px;background:#2272b9"></div><div class="abs" style="left:69.5px;top:298px;width:23px;height:23.5px;background:#2272b9"></div><div class="lab en" style="left:15px;top:334px">pngma.png</div></div><div class="abs" style="left:684.5px;top:159px;width:2px;height:312px;background:#8a8a8a;border-radius:1px"></div><div class="status"><div class="t" style="left:14px;top:5.5px;font-size:12px;color:#1b2a55;">9 个项目</div><div class="sep" style="left:71px;top:4px;height:15px;background:#eee"></div><div class="t" style="left:81px;top:5.5px;font-size:12px;color:#1b2a55;">选中 1 个项目&nbsp;&nbsp;52 字节</div><div class="sep" style="left:217px;top:4px;height:15px;background:#eee"></div><svg width="12" height="10" style="left:650px;top:7px" viewBox="0 0 12 10"><path d="M0 .5h12M0 3.5h12M0 6.5h12M0 9.5h12" stroke="#111" stroke-width="1"/></svg><div class="abs" style="left:667px;top:0;width:22px;height:23px;background:#cde3ee;border:1px solid #2d8fd0"></div><svg width="12" height="12" style="left:673px;top:6px" viewBox="0 0 12 12"><rect x=".5" y=".5" width="11" height="8.5" fill="#fff" stroke="#111" stroke-width="1"/><path d="M.5 11.5h11" stroke="#111" stroke-width="1"/></svg></div><div class="shade"></div></div></div><div class="ex" style="top:516px;height:516px"><div class="in"><div class="tb"></div><div class="abs" style="left:0;top:38px;width:693px;height:1px;background:#dcdcdc"></div><div class="tabl"><i></i></div><div class="tabr"><i></i></div><div class="tab"></div><svg width="16" height="14" style="left:17px;top:16px;"><use href="#s-folder" width="16" height="14"/></svg><div class="t" style="left:43px;top:18px;font-size:12.5px;">upload</div><svg width="9" height="9" style="left:222px;top:18px;color:#333;"><use href="#s-x" width="9" height="9"/></svg><svg width="10" height="10" style="left:266px;top:18px;color:#333;"><use href="#s-plus" width="10" height="10"/></svg><svg width="10" height="1" style="left:574px;top:14px;color:#777;"><use href="#s-min" width="10" height="1"/></svg><svg width="10" height="10" style="left:619px;top:9px;color:#777;"><use href="#s-max" width="10" height="10"/></svg><svg width="10" height="10" style="left:665px;top:9px;color:#777;"><use href="#s-x" width="10" height="10"/></svg><div class="nav"><div class="box" style="left:201px;width:342px"></div><div class="box" style="left:551px;width:150px"></div></div><svg width="13" height="12" style="left:21px;top:57px;color:#1b1b1b;"><use href="#s-back" width="13" height="12"/></svg><svg width="13" height="12" style="left:69px;top:57px;color:#a2a2a2;"><use href="#s-fwd" width="13" height="12"/></svg><svg width="12" height="13" style="left:117px;top:57px;color:#1b1b1b;"><use href="#s-up" width="12" height="13"/></svg><svg width="13" height="14" style="left:165px;top:56px;color:#1b1b1b;"><use href="#s-ref" width="13" height="14"/></svg><svg width="16" height="15" style="left:214px;top:55px;"><use href="#s-pc" width="16" height="15"/></svg><svg width="5" height="9" style="left:250px;top:58.5px;color:#333;"><use href="#s-chev" width="5" height="9"/></svg><div class="abs" style="left:275px;top:62.5px;width:2.4px;height:2.4px;border-radius:2px;background:#1b1b1b;box-shadow:4.5px 0 0 #1b1b1b,9px 0 0 #1b1b1b"></div><div class="t" style="left:305px;top:56px;font-size:14px;">WWW</div><svg width="5" height="9" style="left:363px;top:58.5px;color:#333;"><use href="#s-chev" width="5" height="9"/></svg><div class="t" style="left:386px;top:56px;font-size:14px;">upload</div><div class="t" style="left:566px;top:57px;font-size:14px;color:#666;letter-spacing:.15px;">在 upload 中搜索</div><div class="tools"></div><svg width="16" height="16" style="left:21px;top:106px;"><use href="#s-new" width="16" height="16"/></svg><div class="t" style="left:45px;top:109px;font-size:12px;">新建</div><svg width="7" height="4.5" style="left:75px;top:112px;"><use href="#s-chevd" width="7" height="4.5"/></svg><div class="sep" style="left:98px;top:98px;height:32px"></div><svg width="15" height="17" style="left:118px;top:106px;opacity:.38;"><use href="#s-cut" width="15" height="17"/></svg><svg width="15" height="15" style="left:166px;top:107px;opacity:.38;"><use href="#s-copy" width="15" height="15"/></svg><svg width="15" height="16" style="left:214px;top:106px;opacity:.38;"><use href="#s-paste" width="15" height="16"/></svg><svg width="17" height="17" style="left:261px;top:106px;opacity:.38;"><use href="#s-ren" width="17" height="17"/></svg><svg width="16" height="15" style="left:310px;top:107px;opacity:.38;"><use href="#s-share" width="16" height="15"/></svg><svg width="15" height="17" style="left:358px;top:106px;opacity:.38;"><use href="#s-del" width="15" height="17"/></svg><div class="sep" style="left:391px;top:98px;height:32px"></div><svg width="18" height="14" style="left:408px;top:107px;"><use href="#s-sort" width="18" height="14"/></svg><div class="t" style="left:432px;top:109px;font-size:12px;">排序</div><svg width="7" height="4.5" style="left:462px;top:112px;"><use href="#s-chevd" width="7" height="4.5"/></svg><div class="abs" style="left:497px;top:113.5px;width:3px;height:3px;border-radius:2px;background:#1b1b1b;box-shadow:6.5px 0 0 #1b1b1b,13px 0 0 #1b1b1b"></div><svg width="16" height="12" style="left:596px;top:108px;"><use href="#s-det" width="16" height="12"/></svg><div class="t" style="left:620px;top:109px;font-size:12px;">详细信息</div><div class="side"><div class="srow" style="top:0px"><svg width="5.5" height="9.5" style="left:14px;top:11.5px;color:#5a5a5a;"><use href="#s-chev" width="5.5" height="9.5"/></svg><svg width="16" height="10.5" style="left:34px;top:10.75px;"><use href="#s-cloud" width="16" height="10.5"/></svg><div class="t en">OneDrive</div></div><div class="abs" style="left:10px;top:48px;width:121px;height:1px;background:#e0e0e0"></div><div class="srow" style="top:64px"><svg width="16" height="12" style="left:34px;top:10px;"><use href="#s-desk" width="16" height="12"/></svg><div class="t">桌面</div><svg width="11" height="11" style="left:124.5px;top:11px;"><use href="#s-pin" width="11" height="11"/></svg></div><div class="srow" style="top:96px"><svg width="13" height="15" style="left:35.5px;top:8.5px;"><use href="#s-dl" width="13" height="15"/></svg><div class="t">下载</div><svg width="11" height="11" style="left:124.5px;top:11px;"><use href="#s-pin" width="11" height="11"/></svg></div><div class="srow" style="top:128px"><svg width="12.5" height="15.5" style="left:35.75px;top:8.25px;"><use href="#s-doc" width="12.5" height="15.5"/></svg><div class="t">文档</div><svg width="11" height="11" style="left:124.5px;top:11px;"><use href="#s-pin" width="11" height="11"/></svg></div><div class="srow" style="top:160px"><svg width="15" height="14" style="left:34.5px;top:9px;"><use href="#s-pic" width="15" height="14"/></svg><div class="t">图片</div><svg width="11" height="11" style="left:124.5px;top:11px;"><use href="#s-pin" width="11" height="11"/></svg></div><div class="srow" style="top:192px"><svg width="16" height="16" style="left:34px;top:8px;"><use href="#s-mus" width="16" height="16"/></svg><div class="t">音乐</div><svg width="11" height="11" style="left:124.5px;top:11px;"><use href="#s-pin" width="11" height="11"/></svg></div><div class="srow" style="top:224px"><svg width="14.5" height="16" style="left:34.75px;top:8px;"><use href="#s-vid" width="14.5" height="16"/></svg><div class="t">视频</div><svg width="11" height="11" style="left:124.5px;top:11px;"><use href="#s-pin" width="11" height="11"/></svg></div><div class="srow" style="top:256px"><svg width="16" height="14" style="left:34px;top:9px;"><use href="#s-folder" width="16" height="14"/></svg><div class="t en">backdoor</div><svg width="11" height="11" style="left:124.5px;top:11px;"><use href="#s-pin" width="11" height="11"/></svg></div><div class="srow" style="top:288px"><svg width="16" height="14" style="left:34px;top:9px;"><use href="#s-folder" width="16" height="14"/></svg><div class="t en">upload</div><svg width="11" height="11" style="left:124.5px;top:11px;"><use href="#s-pin" width="11" height="11"/></svg></div><div class="srow" style="top:320px"><svg width="16" height="14" style="left:34px;top:9px;"><use href="#s-folder" width="16" height="14"/></svg><div class="t">条件竞争</div><svg width="11" height="11" style="left:124.5px;top:11px;"><use href="#s-pin" width="11" height="11"/></svg></div></div><div class="split"></div><div class="abs" style="left:147px;top:197px;width:2px;height:167px;background:#8a8a8a;border-radius:1px"></div><div class="main"><svg width="70" height="94" style="left:35px;top:9px;"><use href="#s-page" width="70" height="94"/></svg><svg width="42" height="30" style="left:49px;top:42px;"><use href="#s-ele" width="42" height="30"/></svg><svg width="19" height="19" style="left:81px;top:80px;"><use href="#s-vsc" width="19" height="19"/></svg><div class="lab num" style="left:15px;top:105px">2024071616262</div><div class="lab num" style="left:15px;top:122px">09535.php</div></div><div class="status"><div class="t" style="left:14px;top:5.5px;font-size:12px;color:#1b2a55;">0 个项目</div><div class="sep" style="left:71px;top:4px;height:15px;background:#eee"></div><svg width="12" height="10" style="left:650px;top:7px" viewBox="0 0 12 10"><path d="M0 .5h12M0 3.5h12M0 6.5h12M0 9.5h12" stroke="#111" stroke-width="1"/></svg><div class="abs" style="left:667px;top:0;width:22px;height:23px;background:#cde3ee;border:1px solid #2d8fd0"></div><svg width="12" height="12" style="left:673px;top:6px" viewBox="0 0 12 12"><rect x=".5" y=".5" width="11" height="8.5" fill="#fff" stroke="#111" stroke-width="1"/><path d="M.5 11.5h11" stroke="#111" stroke-width="1"/></svg></div><div class="shade"></div></div></div>
<div id="ff"><div class="abs" style="left:0;top:0;width:1224px;height:44px;background:#f0f0f4;border-top:1px solid #5f5f5f"></div><svg width="16" height="16" style="left:52px;top:14px;color:#5b5b66;"><use href="#f-view" width="16" height="16"/></svg><div class="abs" style="left:82px;top:1px;width:1px;height:43px;background:#c4c4cc"></div><div class="abs" style="left:87px;top:4px;width:221px;height:36px;background:#fff;border-radius:4px;box-shadow:0 0 3px rgba(0,0,0,.35)"></div><svg width="16" height="13" style="left:95px;top:16.5px" viewBox="0 0 16 13"><path d="M0 2C0 .9.9 0 2 0h4l1.6 1.6H14c1.1 0 2 .9 2 2V11c0 1.1-.9 2-2 2H2c-1.1 0-2-.9-2-2z" fill="#111"/><path d="M4.6 10.5C3.4 10.5 2.6 9.7 2.6 8.7 2.6 7.8 3.3 7.1 4.2 7 4.6 5.7 5.7 4.8 7.1 4.8c1.5 0 2.7 1 3 2.3 1.1.1 1.9.9 1.9 1.8 0 .9-.8 1.6-1.8 1.6z" fill="#888"/><path d="M7.2 10.8V8.2H6L8 6.2 10 8.2H8.8V10.8z" fill="#111"/></svg><div class="t" style="left:117px;top:15.7px;font-size:13px;color:#15141a;">upload-labs</div><svg width="8" height="8" style="left:288px;top:18px;color:#15141a;stroke-width:1.3"><use href="#s-x" width="8" height="8"/></svg><svg width="16" height="16" style="left:320px;top:14px;color:#15141a;"><use href="#f-gear" width="16" height="16"/></svg><div class="t" style="left:341px;top:17px;font-size:12px;color:#15141a;">高级首选项</div><svg width="8" height="8" style="left:513px;top:18px;color:#15141a;"><use href="#s-x" width="8" height="8"/></svg><svg width="11" height="11" style="left:549px;top:16.5px;color:#15141a;"><use href="#s-plus" width="11" height="11"/></svg><svg width="14" height="8" style="left:1018px;top:18px" viewBox="0 0 14 8"><path d="M1 1l6 6 6-6" fill="none" stroke="#15141a" stroke-width="1.3"/></svg><svg width="10" height="1" style="left:1103px;top:21.5px;color:#111;"><use href="#s-min" width="10" height="1"/></svg><svg width="10" height="10" style="left:1149px;top:17px;color:#111;"><use href="#s-max" width="10" height="10"/></svg><svg width="10.5" height="10.5" style="left:1194px;top:17px;color:#111;"><use href="#s-x" width="10.5" height="10.5"/></svg><div class="abs" style="left:0;top:44px;width:1224px;height:69px;background:#f9f9fb"></div><svg width="15" height="13" style="left:17px;top:57.5px;color:#5b5b66;"><use href="#f-back" width="15" height="13"/></svg><svg width="15" height="13" style="left:53px;top:57.5px;color:#b9b9c0;"><use href="#f-fwd" width="15" height="13"/></svg><svg width="15" height="15" style="left:89px;top:56.5px;color:#5b5b66;"><use href="#f-rel" width="15" height="15"/></svg><svg width="16" height="16" style="left:124px;top:56px;color:#5b5b66;"><use href="#f-home" width="16" height="16"/></svg><div class="abs" style="left:225px;top:48px;width:701px;height:32px;background:#f0f0f4;border-radius:4px"></div><svg width="16" height="16" style="left:233px;top:56px;color:#5b5b66;"><use href="#f-shield" width="16" height="16"/></svg><svg width="16" height="16" style="left:261px;top:56px;color:#5b5b66;"><use href="#f-lock" width="16" height="16"/></svg><div class="t" style="left:288px;top:56.5px;font-size:14.65px;color:#15141a">192.168.1.8<span style="color:#7b7b85">/Pass-06/index.php?action=show_code</span></div><svg width="14" height="14" style="left:847px;top:57px;color:#5b5b66;"><use href="#f-qr" width="14" height="14"/></svg><svg width="13" height="14" style="left:875px;top:57px;color:#5b5b66;"><use href="#f-reader" width="13" height="14"/></svg><svg width="17" height="16" style="left:901px;top:56px;color:#5b5b66;"><use href="#f-star" width="17" height="16"/></svg><svg width="16" height="16" style="left:1011px;top:56px;color:#5b5b66;"><use href="#f-acct" width="16" height="16"/></svg><svg width="15" height="15" style="left:1047px;top:56.5px;color:#4a4a55;"><use href="#f-crop" width="15" height="15"/></svg><svg width="16" height="14" style="left:1083px;top:57px;color:#4a4a55;"><use href="#f-undo" width="16" height="14"/></svg><svg width="16" height="16" style="left:1118px;top:56px;color:#5b5b66;"><use href="#f-puz" width="16" height="16"/></svg><div class="abs" style="left:1155px;top:56px;width:16px;height:16px;border-radius:8px;border:4.5px solid #d99cf0"></div><svg width="13" height="12" style="left:1192px;top:58px;color:#5b5b66;"><use href="#f-menu" width="13" height="12"/></svg><svg width="15" height="13" style="left:13px;top:91.5px;"><use href="#f-bfold" width="15" height="13"/></svg><div class="t" style="left:32px;top:93px;font-size:12px;color:#15141a;">火狐官方站点</div><svg width="16" height="16" style="left:116px;top:89.5px;"><use href="#f-fx" width="16" height="16"/></svg><div class="t" style="left:136px;top:93px;font-size:12px;color:#15141a;">新手上路</div><svg width="15" height="13" style="left:197px;top:91.5px;"><use href="#f-bfold" width="15" height="13"/></svg><div class="t" style="left:216px;top:93px;font-size:12px;color:#15141a;">常用网址</div><svg width="15" height="15" style="left:277px;top:90.5px;"><use href="#f-globe" width="15" height="15"/></svg><div class="t" style="left:296px;top:93px;font-size:12px;color:#15141a;">京东商城</div><svg width="11" height="15" style="left:1101px;top:90.5px;"><use href="#f-mob" width="11" height="15"/></svg><div class="t" style="left:1115px;top:93px;font-size:12px;color:#15141a;">移动设备上的书签</div><div id="page"><div class="abs" style="left:0;top:0;width:1224px;height:65px;background:#333;border-bottom:1px solid #050505;box-sizing:content-box"></div><svg width="240" height="54" style="left:30px;top:5px" viewBox="0 0 240 54"><rect x="7.2" y="33.6" width="23.4" height="4.2" fill="#dcae47"/><rect x="7.2" y="27" width="4" height="10.8" fill="#dcae47"/><rect x="26.6" y="27" width="4" height="10.8" fill="#dcae47"/><rect x="16.9" y="10" width="4" height="27.8" fill="#dcae47"/><path d="M9 19.5 18.9 9.6 28.8 19.5" fill="none" stroke="#dcae47" stroke-width="3.6" stroke-linecap="round" stroke-linejoin="miter"/><rect x="34.7" y="23.2" width="4" height="24.3" fill="#dcae47"/><rect x="36.7" y="25.2" width="11.9" height="10.6" fill="none" stroke="#dcae47" stroke-width="4"/><rect x="54.7" y="8.7" width="4" height="29.1" fill="#dcae47"/><rect x="54.7" y="33.6" width="19" height="4.2" fill="#dcae47"/><rect x="80.5" y="25.2" width="11.2" height="10.6" fill="none" stroke="#dcae47" stroke-width="4"/><rect x="100" y="25.2" width="11.7" height="10.6" fill="none" stroke="#dcae47" stroke-width="4"/><rect x="104" y="28.2" width="3.7" height="4.1" fill="#dcae47"/><rect x="119.5" y="25.2" width="11.2" height="10.6" fill="none" stroke="#dcae47" stroke-width="4"/><rect x="128.7" y="8.7" width="4" height="29.1" fill="#dcae47"/><rect x="137" y="26.6" width="13.6" height="3.4" fill="#dcae47"/><rect x="155" y="8.7" width="4" height="29.1" fill="#dcae47"/><rect x="164.2" y="25.2" width="11.3" height="10.6" fill="none" stroke="#dcae47" stroke-width="4"/><rect x="168.2" y="28.2" width="3.7" height="4.1" fill="#dcae47"/><rect x="195" y="8.7" width="4" height="20.3" fill="#dcae47"/><path d="M183.2 37.8 197 26.4 210.8 37.8ZM192.4 33.6H201.6L197 29.8Z" fill="#dcae47" fill-rule="evenodd"/><rect x="215.6" y="8.7" width="16.9" height="4.1" fill="#dcae47"/><rect x="215.6" y="8.7" width="4" height="16.3" fill="#dcae47"/><rect x="215.6" y="21" width="16.9" height="4" fill="#dcae47"/><rect x="228.5" y="21" width="4" height="16.8" fill="#dcae47"/><rect x="215.6" y="33.6" width="16.9" height="4.2" fill="#dcae47"/><rect x="215.6" y="30" width="4" height="7.8" fill="#dcae47"/></svg><div class="btn" style="left:1008px;top:16px;width:69px;height:30px;line-height:30px;overflow:hidden">隐藏源码</div><div class="btn" style="left:1101px;top:16px;width:69px;height:30px;line-height:30px;overflow:hidden">查看提示</div><div class="btn" style="left:1195px;top:16px;width:95px;height:30px;line-height:30px;overflow:hidden">清空上传文件</div><div class="abs" style="left:59px;top:207px;width:118px;height:27px;background:#282828;border-radius:6px"></div><div class="pass" style="top:94px">Pass-01</div><div class="pass" style="top:117px">Pass-02</div><div class="pass" style="top:140px">Pass-03</div><div class="pass" style="top:163px">Pass-04</div><div class="pass" style="top:186px">Pass-05</div><div class="pass" style="top:209px">Pass-06</div><div class="pass" style="top:232px">Pass-07</div><div class="pass" style="top:255px">Pass-08</div><div class="pass" style="top:278px">Pass-09</div><div class="pass" style="top:301px">Pass-10</div><div class="pass" style="top:324px">Pass-11</div><div class="pass" style="top:347px">Pass-12</div><div class="pass" style="top:370px">Pass-13</div><div class="pass" style="top:393px">Pass-14</div><div class="pass" style="top:416px">Pass-15</div><div class="pass" style="top:439px">Pass-16</div><div class="pass" style="top:462px">Pass-17</div><div class="pass" style="top:485px">Pass-18</div><div class="pass" style="top:508px">Pass-19</div><div class="pass" style="top:531px">Pass-20</div><div class="abs" style="left:196px;top:86px;width:1100px;height:900px;background:#444;border-radius:8px 0 0 0"></div><div class="h3" style="top:118px">任务</div><div class="p" style="top:159px">上传一个</div><div class="abs" style="left:322.5px;top:157px;width:52.5px;height:20.5px;background:#343434;border-radius:5px;color:#e6db74;font-family:'Liberation Mono',monospace;font-size:9.2px;line-height:21px;text-align:center">webshell</div><div class="p" style="left:379px;top:159px">到服务器。</div><div class="h3" style="top:197px">上传区</div><div class="p" style="top:238px">请选择要上传的图片：</div><div class="abs" style="left:246px;top:278px;width:214px;height:23px;background:#333;border-radius:5px"></div><div class="abs" style="left:246.5px;top:278.5px;width:48px;height:22.5px;background:#e9e9ed;border:1px solid #8f8f9d;border-radius:4px;color:#111;font-size:13px;line-height:21px;text-align:center;white-space:nowrap">浏览...</div><div class="t" style="left:300px;top:283px;font-size:13px;color:#fff;">未选择文件。</div><div class="btn" style="left:479px;top:279px;width:35px;height:23px;line-height:23px;font-weight:normal;border-radius:5px;color:#222">上传</div><div class="abs" style="left:266px;top:332px;width:252px;height:252px;border:1px solid;border-color:#5a5a5a #c8c8c8 #c8c8c8 #5a5a5a"></div><svg width="12" height="14" style="left:273px;top:338px" viewBox="0 0 12 14"><path d="M0 0h8l4 4v10H0z" fill="#f2f2f2"/><path d="M8 0v4h4z" fill="#bdbdbd"/><path d="M0 7.2 2 9 4 6.8 6 9 8 6.8 10 9 12 7.2V9.8L10 11.6 8 9.4 6 11.6 4 9.4 2 11.6 0 9.8z" fill="#444"/></svg><div class="h3" style="top:606px">代码</div><div class="abs" style="left:246px;top:644px;width:965px;height:400px;background:#121212;border:4px solid #575757;border-radius:9px;overflow:hidden"><div class="abs" style="left:48px;top:19px;width:1px;height:400px;background:#999"></div><div class="ln" style="left:-4px;top:20.499999999999954px">1</div><div class="cl" style="left:60px;top:18.599999999999955px"><span class="v">$is_upload</span> = <span class="b">false</span>;</div><div class="ln" style="left:-4px;top:44.49999999999996px">2</div><div class="cl" style="left:60px;top:42.59999999999995px"><span class="v">$msg</span> = <span class="f">null</span>;</div><div class="ln" style="left:-4px;top:68.49999999999996px">3</div><div class="cl" style="left:60px;top:66.59999999999995px"><span class="f">if</span> (<span class="f">isset</span>(<span class="v">$_POST</span>[<span class="s">'submit'</span>])) {</div><div class="ln" style="left:-4px;top:92.49999999999996px">4</div><div class="cl" style="left:60px;top:90.59999999999995px">    <span class="f">if</span> (<span class="f">file_exists</span>(<span class="f" style="color:#eee">UPLOAD_PATH</span>)) {</div><div class="ln" style="left:-4px;top:116.49999999999996px">5</div><div class="cl" style="left:60px;top:114.59999999999995px">        <span class="v">$deny_ext</span> = <span class="f">array</span>(<span class="s">".php"</span>,<span class="s">".php5"</span>,<span class="s">".php4"</span>,<span class="s">".php3"</span>,<span class="s">".php2"</span>,<span class="s">".html"</span>,<span class="s">".htm"</span>,<span class="s">".phtml"</span>,<span class="s">".pht"</span>,<span class="s">".pHp"</span>,<span class="s">".pHp5"</span>,<span class="s">".pHp4"</span></div><div class="ln" style="left:-4px;top:140.49999999999994px">6</div><div class="cl" style="left:60px;top:138.59999999999997px">        <span class="v">$file_name</span> = <span class="v">$_FILES</span>[<span class="s">'upload_file'</span>][<span class="s">'name'</span>];</div><div class="ln" style="left:-4px;top:164.49999999999994px">7</div><div class="cl" style="left:60px;top:162.59999999999997px">        <span class="v">$file_name</span> = <span class="f">deldot</span>(<span class="v">$file_name</span>);<span class="c">//<span class="z">删除文件名末尾的点</span></span></div><div class="ln" style="left:-4px;top:188.49999999999994px">8</div><div class="cl" style="left:60px;top:186.59999999999997px">        <span class="v">$file_ext</span> = <span class="f">strrchr</span>(<span class="v">$file_name</span>, <span class="s">'.'</span>);</div><div class="ln" style="left:-4px;top:212.49999999999994px">9</div><div class="cl" style="left:60px;top:210.59999999999997px">        <span class="v">$file_ext</span> = <span class="f">strtolower</span>(<span class="v">$file_ext</span>); <span class="c">//<span class="z">转换为小写</span></span></div><div class="ln" style="left:-4px;top:236.49999999999994px">10</div><div class="cl" style="left:60px;top:234.59999999999997px">        <span class="v">$file_ext</span> = <span class="f">str_ireplace</span>(<span class="s">'::$DATA'</span>, <span class="s">''</span>, <span class="v">$file_ext</span>);<span class="c">//<span class="z">去除字符串</span>::$DATA</span></div><div class="ln" style="left:-4px;top:260.49999999999994px">11</div><div class="cl" style="left:60px;top:258.59999999999997px"></div></div><div class="abs" style="left:1218px;top:12px;width:2px;height:417px;background:#969696;border-radius:1px"></div><div class="abs" style="left:12px;top:913px;width:1058px;height:2px;background:#9a9a9a;border-radius:1px"></div><div class="abs" style="left:0;top:0;width:1px;height:918px;background:#000"></div><div class="abs" style="left:0;top:918px;width:1224px;height:1px;background:#7d8486"></div></div><div class="abs" style="left:1223px;top:0;width:1px;height:1031px;background:#7a7a7a"></div></div>
<div id="task"><div class="abs" style="left:632px;top:13px;width:11px;height:11px;background:linear-gradient(135deg,#45baf5,#0d74d8);border-radius:1px"></div><div class="abs" style="left:644px;top:13px;width:11px;height:11px;background:linear-gradient(135deg,#45baf5,#0d74d8);border-radius:1px"></div><div class="abs" style="left:632px;top:25px;width:11px;height:11px;background:linear-gradient(135deg,#45baf5,#0d74d8);border-radius:1px"></div><div class="abs" style="left:644px;top:25px;width:11px;height:11px;background:linear-gradient(135deg,#45baf5,#0d74d8);border-radius:1px"></div><div class="abs" style="left:670px;top:9px;width:98px;height:30px;border-radius:15px;background:#eef5f6;border:1px solid #dfeced"></div><svg width="15" height="15" style="left:698px;top:17px" viewBox="0 0 15 15"><circle cx="6" cy="6" r="4.8" fill="none" stroke="#222" stroke-width="1.4"/><path d="M9.6 9.6 14 14" stroke="#222" stroke-width="1.5"/></svg><div class="t" style="left:717px;top:19px;font-size:12.5px;color:#222;">搜索</div><div class="abs" style="left:782px;top:20px;width:18px;height:15px;background:#222;border-radius:1.5px"></div><div class="abs" style="left:788px;top:13px;width:18px;height:15px;background:linear-gradient(135deg,#fff,#cfcfcf);border-radius:1.5px;opacity:.95"></div><svg width="25" height="22" style="left:826px;top:13px" viewBox="0 0 25 22"><path d="M0 2.5C0 1.1 1.1 0 2.5 0H8.5l2.5 2.5H22.5c1.4 0 2.5 1.1 2.5 2.5V8H0z" fill="#e9a512"/><rect x="0" y="3" width="25" height="19" rx="2" fill="#ffd04c"/><path d="M5 22v-5.5c0-1.1.9-2 2-2h11c1.1 0 2 .9 2 2V22z" fill="#1d7fd4"/><rect x="8" y="16.5" width="9" height="2" rx="1" fill="#0f5ea8"/></svg><svg width="24" height="24" style="left:870px;top:12px" viewBox="0 0 24 24"><path d="M7 6V3.5C7 2.1 8.1 1 9.5 1h5C15.9 1 17 2.1 17 3.5V6" fill="none" stroke="#3da4ee" stroke-width="1.8"/><path d="M0 6h24v14c0 2.2-1.8 4-4 4H4c-2.2 0-4-1.8-4-4z" fill="#17457e"/><rect x="7.5" y="10" width="4" height="4" fill="#f25022"/><rect x="12.5" y="10" width="4" height="4" fill="#7fba00"/><rect x="7.5" y="15" width="4" height="4" fill="#00a4ef"/><rect x="12.5" y="15" width="4" height="4" fill="#ffb900"/></svg><svg width="24.5" height="24.5" style="left:913.8px;top:11.599999999999909px" viewBox="0 0 24.5 24.5"><defs><linearGradient id="ge1" x1="0" y1=".4" x2="1" y2=".3"><stop offset="0" stop-color="#1d9bea"/><stop offset=".5" stop-color="#2bc3d4"/><stop offset="1" stop-color="#5ee257"/></linearGradient><linearGradient id="ge2" x1="0" y1="0" x2="1" y2="1"><stop offset="0" stop-color="#1a86dc"/><stop offset="1" stop-color="#0c4d99"/></linearGradient></defs><circle cx="12.25" cy="12.25" r="12" fill="url(#ge1)"/><path d="M.3 12.5C.5 8 4 5.8 8 6.2 10 6.4 11.5 7.5 12.3 9 10 9.5 8.7 11.8 9.2 14.5 9.8 17.8 13 20 16.5 20 18.8 20 20.8 19.3 22.3 18 20.5 22 16.5 24.5 12.25 24.25 5.5 24.25.1 19 .3 12.5Z" fill="#1787de"/><path d="M7.3 7.8C8.8 7.3 10.8 7.8 12.3 9 10 9.5 8.7 11.8 9.2 14.5 9.8 17.8 13 20 16.5 20 18.8 20 20.8 19.3 22.3 18 20.5 22 16.5 24.5 12.25 24.25 8.5 23.5 6 20.5 5.5 16.5 5 13 5.6 10 7.3 7.8Z" fill="url(#ge2)"/><path d="M12.3 9C14.3 8.6 15.8 10 15.6 11.9 15.4 13.2 14.3 13.8 14.1 14.8 14.8 16.8 17.8 17.3 20.3 16.4 21.3 16 22 15.5 22.6 14.9 22.8 16 22.7 17 22.3 18 20.8 19.3 18.8 20 16.5 20 13 20 9.8 17.8 9.2 14.5 8.7 11.8 10 9.5 12.3 9Z" fill="#fafdfd"/></svg><div class="abs" style="left:951px;top:5px;width:38px;height:38.5px;border-radius:5px;background:#eff3f4;border:1px solid #e2eaeb"></div><svg width="24" height="24" style="left:958px;top:11.5px;"><use href="#f-fx" width="24" height="24"/></svg><div class="abs" style="left:962px;top:40px;width:16px;height:3px;border-radius:2px;background:#1a7f93"></div><svg width="25" height="19" style="left:1001px;top:15px" viewBox="0 0 25 19"><rect x=".5" y=".5" width="24" height="18" fill="#eaf3fb" stroke="#9db4c8"/><path d="M2 16 5 11 7 13 8.5 5 11 12 13 10 15 14 17.5 4 20 13 23 15V17H2z" fill="#5fa8e0"/><path d="M2 16 5 11 7 13 8.5 5 11 12 13 10 15 14 17.5 4 20 13 23 15" fill="none" stroke="#2f7fc2" stroke-width=".8"/></svg><svg width="25" height="21" style="left:1045px;top:14px" viewBox="0 0 25 21"><path d="M8.5 0C3.8 0 0 3.2 0 7.2c0 2.2 1.2 4.2 3 5.5L2.2 15.5l3.2-1.7c1 .3 2 .5 3.1.5 4.7 0 8.5-3.2 8.5-7.2S13.2 0 8.5 0z" fill="#3fd35c"/><path d="M18 8c-3.9 0-7 2.6-7 5.9 0 3.3 3.1 5.9 7 5.9.9 0 1.7-.1 2.5-.4L23 20.8l-.7-2.3c1.6-1.1 2.7-2.7 2.7-4.6C25 10.6 21.9 8 18 8z" fill="#eee"/><circle cx="15.7" cy="12.6" r=".9" fill="#888"/><circle cx="20.3" cy="12.6" r=".9" fill="#888"/></svg><div class="abs" style="left:1090px;top:12px;width:24px;height:24px;border-radius:5px;background:#4d55f5"></div><svg width="18" height="18" style="left:1093px;top:15px" viewBox="0 0 18 18"><g fill="none" stroke="#fff" stroke-width="1.7"><ellipse cx="9" cy="6.5" rx="3.2" ry="4.5"/><ellipse cx="5.8" cy="11.5" rx="3.2" ry="4.5" transform="rotate(-62 5.8 11.5)"/><ellipse cx="12.2" cy="11.5" rx="3.2" ry="4.5" transform="rotate(62 12.2 11.5)"/></g></svg><div class="abs" style="left:1134px;top:12px;width:24px;height:24px;background:#5a50f0"></div><svg width="12" height="18" style="left:1140px;top:15px" viewBox="0 0 12 18"><path d="M7.5 0 2 8.5h3.5L8.5 11 4.5 18 11 9.5 7.5 7.2 9.5 3z" fill="#fff"/></svg><div class="abs" style="left:1179px;top:13px;width:21px;height:21px;border-radius:4px;background:#fdfdfd;box-shadow:0 0 2px rgba(0,0,0,.15);font-family:'Liberation Serif',serif;font-weight:bold;font-size:19px;line-height:21px;text-align:center;color:#222">T</div><svg width="24" height="24" style="left:1222px;top:12px" viewBox="0 0 24 24"><circle cx="12" cy="12" r="10" fill="#6b8898" stroke="#4e6574" stroke-width="1.5"/><circle cx="12" cy="12" r="4.5" fill="none" stroke="#e8eef1" stroke-width="1.6"/><path d="M12 9.5v5" stroke="#e8eef1" stroke-width="1.6"/><path d="M2 22 21 2" stroke="#222" stroke-width="1"/></svg><svg width="24" height="24" style="left:1266px;top:12px;"><use href="#s-vsc" width="24" height="24"/></svg><div class="abs" style="left:835px;top:40px;width:6px;height:3px;border-radius:2px;background:#858b8e"></div><div class="abs" style="left:923px;top:40px;width:6px;height:3px;border-radius:2px;background:#858b8e"></div><div class="abs" style="left:1010px;top:40px;width:6px;height:3px;border-radius:2px;background:#858b8e"></div><div class="abs" style="left:1054px;top:40px;width:6px;height:3px;border-radius:2px;background:#858b8e"></div><div class="abs" style="left:1099px;top:40px;width:6px;height:3px;border-radius:2px;background:#858b8e"></div><div class="abs" style="left:1143px;top:40px;width:6px;height:3px;border-radius:2px;background:#858b8e"></div><div class="abs" style="left:1186px;top:40px;width:6px;height:3px;border-radius:2px;background:#858b8e"></div><div class="abs" style="left:1231px;top:40px;width:6px;height:3px;border-radius:2px;background:#858b8e"></div><div class="abs" style="left:1275px;top:40px;width:6px;height:3px;border-radius:2px;background:#858b8e"></div><svg width="12" height="7" style="left:1703px;top:20px" viewBox="0 0 12 7"><path d="M1 6 6 1l5 5" fill="none" stroke="#1b1b1b" stroke-width="1.3"/></svg><div class="t" style="left:1733px;top:17px;font-size:15.5px;color:#1b1b1b;">英</div><svg width="17" height="16" style="left:1765px;top:17px" viewBox="0 0 17 16"><path d="M11 1.8H1.8C1.1 1.8.600 2.3.600 3V11c0 .7.5 1.2 1.2 1.2H13.5M4.5 15h7M6.5 12.3V15M10.5 12.3V15M13.6 7V15" fill="none" stroke="#1b1b1b" stroke-width="1.1"/><rect x="12.2" y=".6" width="3.6" height="6.2" rx="1.2" fill="none" stroke="#1b1b1b" stroke-width="1.1"/></svg><svg width="16" height="14" style="left:1789px;top:17px" viewBox="0 0 16 14"><path d="M.6 4.6H3L6.6 1.4V12.6L3 9.4H.6z" fill="none" stroke="#1b1b1b" stroke-width="1.1" stroke-linejoin="round"/><path d="M8.6 4.8c1 1.2 1 3.2 0 4.4M10.6 3c2 2.2 2 5.8 0 8" fill="none" stroke="#1b1b1b" stroke-width="1.1"/><path d="M12.6 1.2c3 3.2 3 8.4 0 11.6" fill="none" stroke="#9aa" stroke-width="1"/></svg><div class="t" style="right:43px;top:10.700000000000045px;font-size:12px;color:#1b1b1b">16:26</div><div class="t" style="right:43px;top:26.700000000000045px;font-size:12px;color:#1b1b1b">2024/7/16</div><svg width="14" height="15" style="left:1885px;top:17px" viewBox="0 0 14 15"><path d="M7 .8C4.2.8 2.4 3 2.4 5.6V9L.8 11.6H13.2L11.6 9V5.6C11.6 3 9.8.8 7 .8z" fill="none" stroke="#1b1b1b" stroke-width="1.1" stroke-linejoin="round"/><path d="M5.2 12a1.8 1.8 0 0 0 3.6 0" fill="none" stroke="#1b1b1b" stroke-width="1.1"/></svg></div>
</body></html>
